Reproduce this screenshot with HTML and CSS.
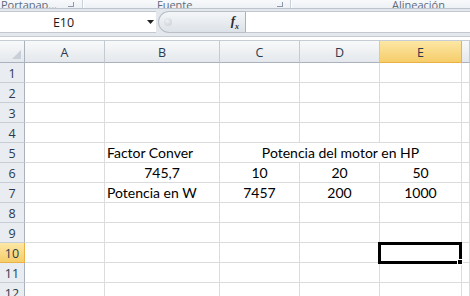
FILE: index.html
```html
<!DOCTYPE html>
<html lang="es">
<head>
    <meta charset="UTF-8">
    <meta name="viewport" content="width=device-width, initial-scale=1.0">
    <title>Libro1 - Excel</title>
    <link rel="stylesheet" href="styles.css">
</head>
<body>
    <div class="ribbon">
        <div class="group group-clip"><span class="label">Portapap...</span><span class="launcher"></span></div>
        <div class="group group-font"><span class="label">Fuente</span><span class="launcher"></span></div>
        <div class="group group-align"><span class="label">Alineación</span></div>
    </div>

    <div class="formula-bar">
        <div class="name-box">
            <span class="cell-ref">E10</span>
            <svg class="drop" width="7" height="4" viewBox="0 0 7 4"><path d="M0 0h7L3.5 4z" fill="#222"/></svg>
        </div>
        <div class="fx-area">
            <span class="dot"></span>
            <span class="fx">f<sub>x</sub></span>
        </div>
        <div class="formula-input"></div>
    </div>

    <div class="sheet" id="sheet">
        <div class="corner"><span class="corner-tri"></span></div>
        <div class="col-head">A</div>
        <div class="col-head">B</div>
        <div class="col-head">C</div>
        <div class="col-head">D</div>
        <div class="col-head active">E</div>
        <div class="col-head"></div>

        <div class="selection"><span class="fill-handle"></span></div>
    </div>

    <script>
        // Cell contents: [text, alignment, merged columns]
        const values = {
            B5: ['Factor Conver', 'left'],
            C5: ['Potencia del motor en HP', 'center', 3],
            B6: ['745,7', 'center'],
            C6: ['10', 'center'],
            D6: ['20', 'center'],
            E6: ['50', 'center'],
            B7: ['Potencia en W', 'left'],
            C7: ['7457', 'center'],
            D7: ['200', 'center'],
            E7: ['1000', 'center']
        };
        const cols = ['A', 'B', 'C', 'D', 'E', 'F'];
        const sheet = document.getElementById('sheet');
        const selection = sheet.querySelector('.selection');

        for (let row = 1; row <= 12; row++) {
            const head = document.createElement('div');
            head.className = 'row-head' + (row === 10 ? ' active' : '');
            head.textContent = row;
            sheet.insertBefore(head, selection);

            let skip = 0;
            cols.forEach(col => {
                if (skip > 0) { skip--; return; }
                const cell = document.createElement('div');
                cell.className = 'cell';
                const value = values[col + row];
                if (value) {
                    cell.textContent = value[0];
                    cell.classList.add(value[1]);
                    if (value[2]) {
                        cell.classList.add('span-' + value[2]);
                        skip = value[2] - 1;
                    }
                }
                sheet.insertBefore(cell, selection);
            });
        }
    </script>
</body>
</html>
```

FILE: styles.css
```css
* {
    margin: 0;
    padding: 0;
    box-sizing: border-box;
}

body {
    width: 470px;
    height: 296px;
    overflow: hidden;
    background-color: #fff;
    font-family: "Open Sans", "DejaVu Sans", sans-serif;
}

/* ribbon bottom edge */
.ribbon {
    display: flex;
    height: 9px;
    overflow: hidden;
    background: linear-gradient(#f7f9fb, #eef1f5);
    border-bottom: 1px solid #bcc4ce;
}

.group {
    position: relative;
    height: 8px;
    border-right: 1px solid #c9d0d9;
    box-shadow: 1px 0 0 #fff;
}

.group-clip {
    width: 83px;
}

.group-font {
    width: 208px;
}

.group-align {
    flex: 1;
    border-right: none;
}

.label {
    position: absolute;
    bottom: -2px;
    font-size: 11px;
    line-height: 11px;
    color: #5d6b7d;
    white-space: nowrap;
}

.group-clip .label {
    left: 1px;
}

.group-font .label {
    left: 74px;
}

.group-align .label {
    left: 101px;
}

.launcher {
    position: absolute;
    bottom: 1px;
    width: 6px;
    height: 5px;
    border-right: 1px solid #8d99a8;
    border-bottom: 1px solid #8d99a8;
}

.group-clip .launcher {
    left: 68px;
}

.group-font .launcher {
    left: 194px;
}

/* formula bar */
.formula-bar {
    display: flex;
    height: 28px;
    padding: 2px 0 3px;
    background-color: #e4e8ed;
    border-bottom: 1px solid #c6ccd4;
}

.name-box {
    display: flex;
    align-items: center;
    width: 156px;
    background-color: #fff;
    border-top: 1px solid #c2c8d0;
    border-bottom: 1px solid #c2c8d0;
}

.cell-ref {
    width: 127px;
    text-align: center;
    font-size: 12.5px;
    color: #1a1a1a;
}

.drop {
    margin-left: 20px;
}

.fx-area {
    display: flex;
    align-items: center;
    justify-content: space-between;
    width: 88px;
    margin-left: 2px;
    padding: 0 6px 0 5px;
    background: linear-gradient(#f4f6f8, #dde2e8);
    border: 1px solid #b8bfc8;
    border-right-color: #a9b1bb;
    border-radius: 11px 0 0 11px;
}

.dot {
    width: 8px;
    height: 8px;
    border-radius: 50%;
    background: radial-gradient(circle at 40% 35%, #eef0f3, #c6ccd3);
}

.fx {
    font-family: "Liberation Serif", serif;
    font-style: italic;
    font-weight: bold;
    font-size: 13px;
    color: #2b2b2b;
}

.fx sub {
    font-size: 8px;
}

.formula-input {
    flex: 1;
    background-color: #fff;
    border-top: 1px solid #c2c8d0;
    border-bottom: 1px solid #c2c8d0;
}

/* worksheet grid */
.sheet {
    position: relative;
    display: grid;
    grid-template-columns: 25px 80px 115px 80px 80px 82px 1fr;
    grid-template-rows: 22px;
    grid-auto-rows: 20px;
    margin-top: 3px;
    border-top: 1px solid #c6ccd4;
}

.corner,
.col-head {
    background: linear-gradient(#f8f9fa, #e4e8ec);
    border-right: 1px solid #c4cad2;
    border-bottom: 1px solid #aab3bd;
}

.corner {
    position: relative;
    border-right-color: #aab3bd;
}

.corner-tri {
    position: absolute;
    right: 3px;
    bottom: 3px;
    width: 0;
    height: 0;
    border-left: 9px solid transparent;
    border-bottom: 9px solid #c9cfd6;
}

.col-head {
    display: flex;
    align-items: center;
    justify-content: center;
    padding-top: 1px;
    font-size: 12.5px;
    color: #2a3a4e;
}

.col-head.active {
    background: linear-gradient(#fce7a5, #f6cd6a);
    border: 1px solid #e9b146;
    border-top: none;
    border-left: none;
}

.row-head {
    display: flex;
    align-items: center;
    justify-content: center;
    padding-top: 1px;
    background-color: #e9ecf0;
    border-right: 1px solid #aab3bd;
    border-bottom: 1px solid #c8ced5;
    font-size: 12.5px;
    color: #2a3a4e;
}

.row-head.active {
    background: linear-gradient(#fce7a5, #f6cd6a);
    border-bottom-color: #e9b146;
    border-right-color: #e9b146;
}

.cell {
    padding: 1px 2px 0;
    border-right: 1px solid #dadcdd;
    border-bottom: 1px solid #dadcdd;
    font-family: "Lato", "Liberation Sans", sans-serif;
    font-size: 14px;
    line-height: 17px;
    color: #000;
    white-space: nowrap;
}

.cell.center {
    text-align: center;
}

.cell.span-3 {
    grid-column: span 3;
}

.selection {
    position: absolute;
    left: 378px;
    top: 201px;
    width: 84px;
    height: 22px;
    border: 3px solid #000;
}

.fill-handle {
    position: absolute;
    right: -4px;
    bottom: -4px;
    width: 6px;
    height: 6px;
    background-color: #000;
    border: 1px solid #fff;
}
```
